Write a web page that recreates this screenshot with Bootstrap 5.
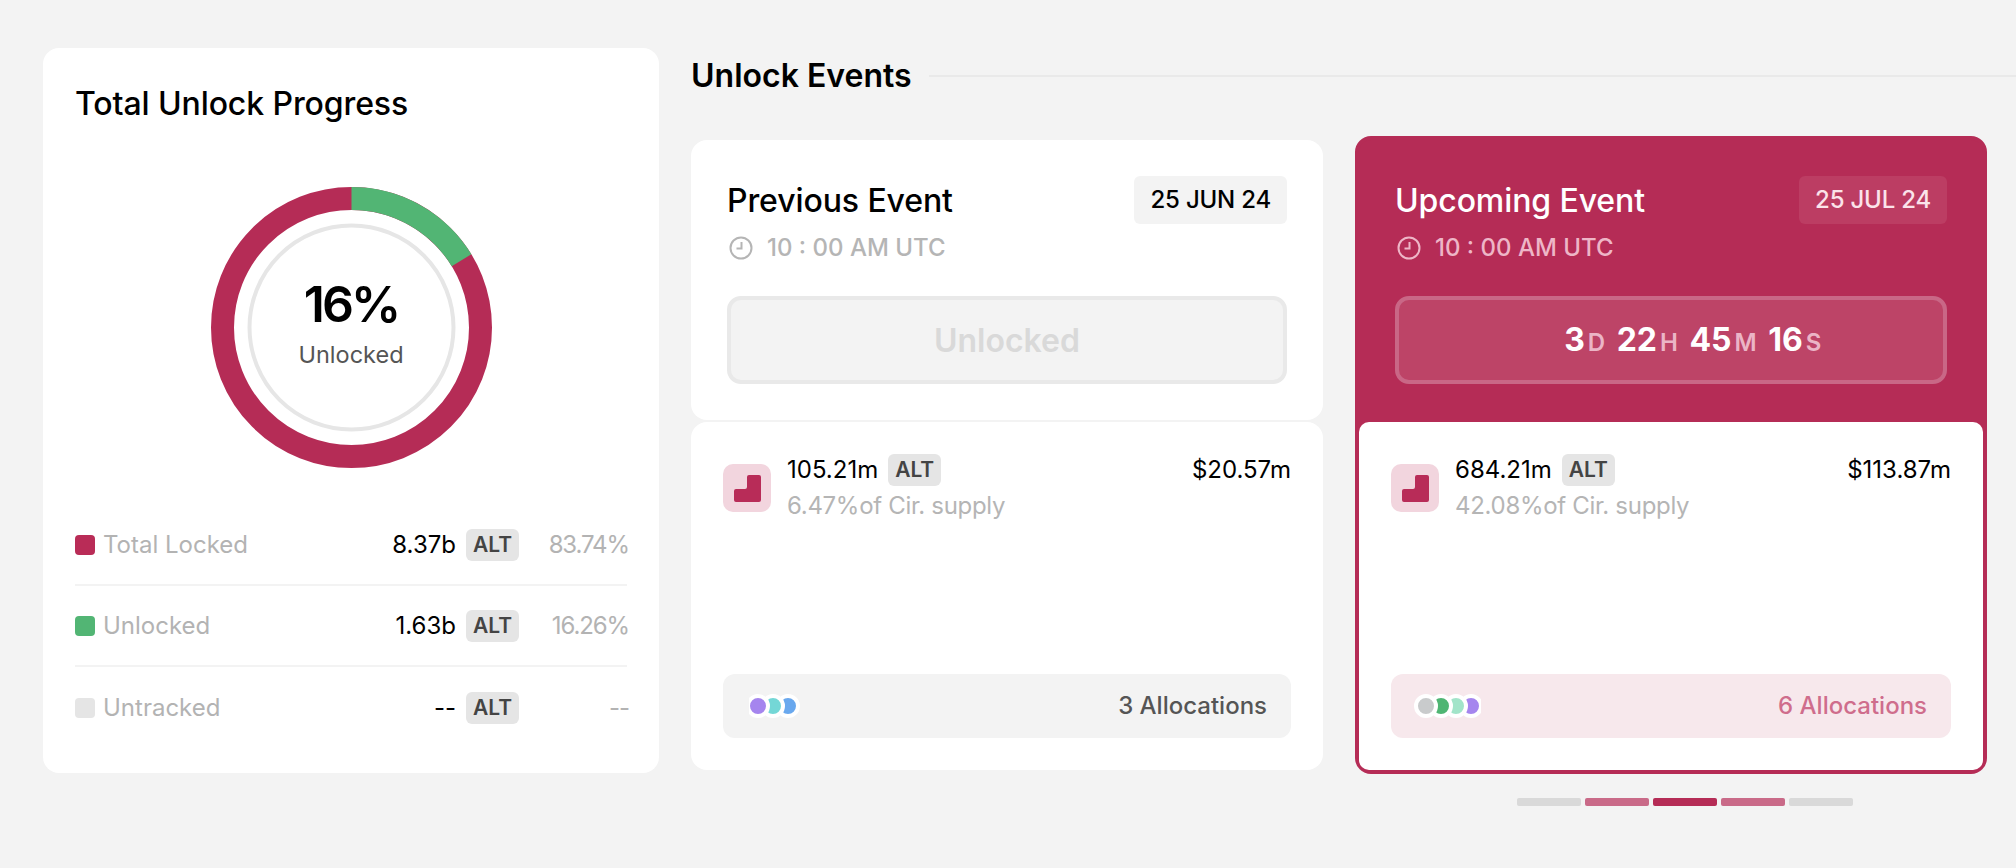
<!DOCTYPE html>
<html lang="en">
<head>
  <meta charset="UTF-8">
  <meta name="viewport" content="width=device-width, initial-scale=1">
  <title>Unlock Events</title>
  <link href="https://cdn.jsdelivr.net/npm/bootstrap@5.3.0/dist/css/bootstrap.min.css" rel="stylesheet">
  <style>
    body {
      background-color: #f3f3f3;
      font-family: "Inter", "Liberation Sans", sans-serif;
      color: #000;
      overflow: hidden;
    }
    .page-wrap { padding: 48px 0 0 43px; }
    .side-col { width: 616px; flex: none; }
    .main-col { margin-left: 32px; flex: 1; min-width: 0; }

    .progress-card { background: #fff; border: 0; border-radius: 16px; padding: 38px 32px 25px; }
    .block-title { font-size: 32px; font-weight: 500; line-height: 36px; margin: 0; letter-spacing: -.1px; }
    .donut-wrap { width: 281px; height: 281px; margin: 65px auto 37px; }
    .donut-center { padding-bottom: 13px; }
    .donut-pct { font-size: 50px; font-weight: 600; line-height: 60px; letter-spacing: -3px; }
    .donut-lbl { font-size: 23.5px; line-height: 30px; color: #555; margin-top: 6px; white-space: nowrap; }

    .legend-row { height: 81px; border-bottom: 2px solid #f3f3f3; }
    .legend-row:last-child { border-bottom: 0; }
    .swatch { width: 20px; height: 20px; border-radius: 4px; margin-right: 8px; }
    .sw-red { background: #b92c57; }
    .sw-green { background: #52b574; }
    .sw-grey { background: #e5e5e5; }
    .txt-lg { font-size: 24px; line-height: 30px; }
    .txt-muted { color: #b3b3b3; }
    .pct-cell { width: 110px; flex: none; text-align: right; letter-spacing: -1.1px; margin-right: -2px; }
    .alt-tag { width: 53px; height: 32px; background: #e5e5e5; color: #444; border-radius: 6px; font-size: 21px; font-weight: 600; margin-left: 10px; }

    .section-title { font-size: 32px; font-weight: 600; line-height: 36px; margin: 10px 0 0; }
    .section-line { height: 2px; background: #e9e9e9; margin-left: 17px; margin-top: 10px; }
    .event-row { margin-top: 42px; gap: 32px; }
    .event-card { width: 632px; flex: none; background: transparent; border: 0; border-radius: 16px; }
    .event-prev { margin-top: 4px; }
    .event-next { background: #b52c56; border: 4px solid #b52c56; margin-top: 0; }
    .event-top { background: #fff; border-radius: 16px; padding: 36px; height: 280px; }
    .event-next .event-top { background: transparent; height: 282px; }
    .event-bottom { background: #fff; border-radius: 16px; margin-top: 2px; height: 348px; padding: 32px; margin-left: 0; }
    .event-next .event-bottom { margin-top: 0; border-radius: 10px; }
    .event-title { font-size: 32px; font-weight: 500; line-height: 40px; margin: 2px 0 0; letter-spacing: -.1px; }
    .date-pill { height: 48px; padding: 0 16px; background: #f3f3f3; border-radius: 6px; font-size: 24px; font-weight: 500; letter-spacing: -.2px; }
    .event-next .event-title { color: #fff; }
    .event-next .date-pill { background: #bc3d63; color: #fbe3ea; }
    .time-row { height: 24px; margin-top: 12px; color: #b5b5b5; font-size: 24px; font-weight: 500; gap: 14px; padding-left: 2px; }
    .time-row svg { width: 24px; height: 24px; stroke: #b5b5b5; }
    .event-next .time-row { color: #eeb6c7; }
    .event-next .time-row svg { stroke: #eeb6c7; }
    .state-box { height: 88px; margin-top: 36px; border: 4px solid #e9e9e9; background: #f3f3f3; border-radius: 14px; color: #d9d9d9; font-size: 32px; font-weight: 600; padding-top: 2px; }
    .timer-box { height: 88px; margin-top: 36px; border: 4px solid #c96786; background: #bd4467; border-radius: 14px; padding-left: 44px; color: #fff; font-size: 32px; font-weight: 700; gap: 11px; }
    .timer-box span { font-size: 24px; font-weight: 600; color: #ebb5c6; margin-left: 3px; letter-spacing: .5px; }

    .token-icon { width: 48px; height: 48px; background: #f2d5de; border-radius: 10px; margin-top: 10px; margin-right: 16px; }
    .amount-row { height: 32px; }
    .sub-txt { font-size: 24px; line-height: 30px; color: #b5b5b5; margin-top: 5px; letter-spacing: -.3px; }
    .alloc-bar { height: 64px; background: #f3f3f3; border-radius: 12px; padding: 0 24px 0 26px; color: #555; font-size: 24px; font-weight: 500; }
    .event-next .alloc-bar { background: #f7e8ec; color: #cf6d8c; padding-left: 23px; padding-right: 24px; }

    .pager { gap: 4px; margin-top: 24px; padding-right: 163px; }
    .pager i { display: block; width: 64px; height: 8px; border-radius: 2px; background: #d9d9d9; }
    .pager i.near { background: #c96a88; }
    .pager i.on { background: #b52c56; }
  </style>
</head>
<body>
  <div class="page-wrap d-flex align-items-start">
    <!-- left: total progress -->
    <div class="side-col">
      <div class="card progress-card">
        <h2 class="block-title">Total Unlock Progress</h2>
        <div class="donut-wrap position-relative">
          <svg width="281" height="281" viewBox="0 0 281 281">
            <circle cx="140.5" cy="140.5" r="129" fill="none" stroke="#b52c56" stroke-width="23"/>
            <circle cx="140.5" cy="140.5" r="129" fill="none" stroke="#52b574" stroke-width="23" pathLength="100" stroke-dasharray="16.26 83.74" transform="rotate(-90 140.5 140.5)"/>
            <circle cx="140.5" cy="140.5" r="102" fill="none" stroke="#e6e6e6" stroke-width="4"/>
          </svg>
          <div class="donut-center position-absolute top-50 start-50 translate-middle text-center">
            <div class="donut-pct">16%</div>
            <div class="donut-lbl">Unlocked</div>
          </div>
        </div>
        <div class="legend-row d-flex align-items-center">
          <div class="swatch sw-red"></div>
          <div class="txt-lg txt-muted me-auto">Total Locked</div>
          <div class="txt-lg">8.37b</div>
          <div class="alt-tag d-flex align-items-center justify-content-center">ALT</div>
          <div class="txt-lg txt-muted pct-cell">83.74%</div>
        </div>
        <div class="legend-row d-flex align-items-center">
          <div class="swatch sw-green"></div>
          <div class="txt-lg txt-muted me-auto">Unlocked</div>
          <div class="txt-lg">1.63b</div>
          <div class="alt-tag d-flex align-items-center justify-content-center">ALT</div>
          <div class="txt-lg txt-muted pct-cell">16.26%</div>
        </div>
        <div class="legend-row d-flex align-items-center">
          <div class="swatch sw-grey"></div>
          <div class="txt-lg txt-muted me-auto">Untracked</div>
          <div class="txt-lg">--</div>
          <div class="alt-tag d-flex align-items-center justify-content-center">ALT</div>
          <div class="txt-lg txt-muted pct-cell">--</div>
        </div>
      </div>
    </div>

    <!-- right: events -->
    <div class="main-col">
      <div class="d-flex align-items-center">
        <h2 class="section-title">Unlock Events</h2>
        <div class="section-line flex-grow-1"></div>
      </div>
      <div class="event-row d-flex align-items-start">
        <!-- previous -->
        <div class="card event-card event-prev">
          <div class="event-top">
            <div class="d-flex justify-content-between align-items-center">
              <h3 class="event-title">Previous Event</h3>
              <div class="date-pill d-flex align-items-center">25 JUN 24</div>
            </div>
            <div class="time-row d-flex align-items-center">
              <svg viewBox="0 0 24 24" fill="none" stroke-width="2"><circle cx="12" cy="12" r="10.5"/><path d="M12.5 6v6.5H7.5"/></svg>
              <div>10 : 00 AM UTC</div>
            </div>
            <div class="state-box d-flex align-items-center justify-content-center">Unlocked</div>
          </div>
          <div class="event-bottom d-flex flex-column justify-content-between">
            <div class="d-flex">
              <div class="token-icon d-flex align-items-center justify-content-center">
                <svg width="27" height="27" viewBox="0 0 27 27"><path fill="#b82c58" d="M15 0h10a2 2 0 0 1 2 2v23a2 2 0 0 1-2 2H2a2 2 0 0 1-2-2V16a2 2 0 0 1 2-2h9a2 2 0 0 0 2-2V2a2 2 0 0 1 2-2z"/></svg>
              </div>
              <div class="flex-grow-1">
                <div class="amount-row d-flex align-items-center">
                  <div class="txt-lg">105.21m</div>
                  <div class="alt-tag d-flex align-items-center justify-content-center">ALT</div>
                  <div class="txt-lg ms-auto">$20.57m</div>
                </div>
                <div class="sub-txt">6.47%of Cir. supply</div>
              </div>
            </div>
            <div class="alloc-bar d-flex align-items-center justify-content-between">
              <svg width="52" height="24" viewBox="0 0 52 24">
                <circle cx="39" cy="12" r="10" fill="#69a8ee" stroke="#fff" stroke-width="4"/>
                <circle cx="24" cy="12" r="10" fill="#74d7d6" stroke="#fff" stroke-width="4"/>
                <circle cx="9" cy="12" r="10" fill="#a585ee" stroke="#fff" stroke-width="4"/>
              </svg>
              <div>3 Allocations</div>
            </div>
          </div>
        </div>
        <!-- upcoming -->
        <div class="card event-card event-next">
          <div class="event-top">
            <div class="d-flex justify-content-between align-items-center">
              <h3 class="event-title">Upcoming Event</h3>
              <div class="date-pill d-flex align-items-center">25 JUL 24</div>
            </div>
            <div class="time-row d-flex align-items-center">
              <svg viewBox="0 0 24 24" fill="none" stroke-width="2"><circle cx="12" cy="12" r="10.5"/><path d="M12.5 6v6.5H7.5"/></svg>
              <div>10 : 00 AM UTC</div>
            </div>
            <div class="timer-box d-flex align-items-center justify-content-center">
              <div>3<span>D</span></div>
              <div>22<span>H</span></div>
              <div>45<span>M</span></div>
              <div>16<span>S</span></div>
            </div>
          </div>
          <div class="event-bottom d-flex flex-column justify-content-between">
            <div class="d-flex">
              <div class="token-icon d-flex align-items-center justify-content-center">
                <svg width="27" height="27" viewBox="0 0 27 27"><path fill="#b82c58" d="M15 0h10a2 2 0 0 1 2 2v23a2 2 0 0 1-2 2H2a2 2 0 0 1-2-2V16a2 2 0 0 1 2-2h9a2 2 0 0 0 2-2V2a2 2 0 0 1 2-2z"/></svg>
              </div>
              <div class="flex-grow-1">
                <div class="amount-row d-flex align-items-center">
                  <div class="txt-lg">684.21m</div>
                  <div class="alt-tag d-flex align-items-center justify-content-center">ALT</div>
                  <div class="txt-lg ms-auto">$113.87m</div>
                </div>
                <div class="sub-txt">42.08%of Cir. supply</div>
              </div>
            </div>
            <div class="alloc-bar d-flex align-items-center justify-content-between">
              <svg width="67" height="24" viewBox="0 0 67 24">
                <circle cx="57" cy="12" r="10" fill="#a585ee" stroke="#fff" stroke-width="4"/>
                <circle cx="42" cy="12" r="10" fill="#a2e4c9" stroke="#fff" stroke-width="4"/>
                <circle cx="27" cy="12" r="10" fill="#4fb573" stroke="#fff" stroke-width="4"/>
                <circle cx="12" cy="12" r="10" fill="#c9cbcc" stroke="#fff" stroke-width="4"/>
              </svg>
              <div>6 Allocations</div>
            </div>
          </div>
        </div>
      </div>
      <div class="pager d-flex justify-content-end">
        <i></i><i class="near"></i><i class="on"></i><i class="near"></i><i></i>
      </div>
    </div>
  </div>
  <script src="https://cdn.jsdelivr.net/npm/bootstrap@5.3.0/dist/js/bootstrap.bundle.min.js"></script>
</body>
</html>
